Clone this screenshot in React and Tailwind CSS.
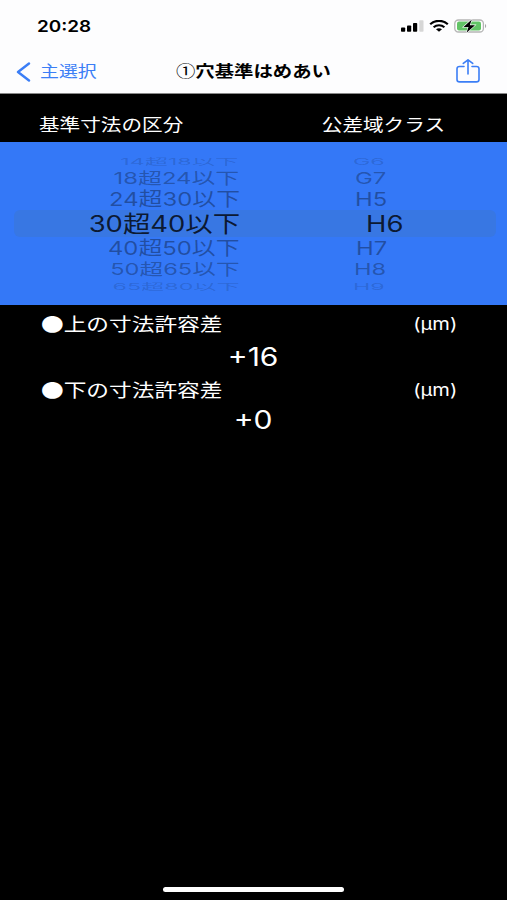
const pickerRows = [
  { size: '14超18以下', grade: 'G6', height: 'h-[13px]', width: 'w-[238px]', scale: 'scale-x-[1.08] scale-y-[0.43]', pad: 'pl-[115px]', color: 'text-black/15' },
  { size: '18超24以下', grade: 'G7', height: 'h-[21px]', width: 'w-[239px]', scale: 'scale-x-[1.11] scale-y-[0.75]', pad: 'pl-[116px]', color: 'text-black/30' },
  { size: '24超30以下', grade: 'H5', height: 'h-[22px]', width: 'w-[240px]', scale: 'scale-x-[1.11] scale-y-[0.88]', pad: 'pl-[115px]', color: 'text-black/35' },
  { size: '30超40以下', grade: 'H6', height: 'h-[27px]', width: 'w-[226px]', scale: 'scale-x-[1.23]', pad: 'pl-[126px]', color: 'text-black/80', selected: true },
  { size: '40超50以下', grade: 'H7', height: 'h-[22px]', width: 'w-[240px]', scale: 'scale-x-[1.11] scale-y-[0.88]', pad: 'pl-[116px]', color: 'text-black/35' },
  { size: '50超65以下', grade: 'H8', height: 'h-[20px]', width: 'w-[240px]', scale: 'scale-x-[1.1] scale-y-[0.75]', pad: 'pl-[114px]', color: 'text-black/30' },
  { size: '65超80以下', grade: 'H9', height: 'h-[13px]', width: 'w-[240px]', scale: 'scale-x-[1.08] scale-y-[0.43]', pad: 'pl-[113px]', color: 'text-black/15' },
]

function StatusIcons() {
  return (
    <div className="flex items-center">
      <svg className="w-[23px] h-[12px]" viewBox="0 0 23 12">
        <rect x="0" y="7.5" width="4.2" height="4.3" rx="0.8" fill="#000" />
        <rect x="6" y="5.5" width="4.2" height="6.3" rx="0.8" fill="#000" />
        <rect x="12" y="3" width="4.2" height="8.8" rx="0.8" fill="#000" />
        <rect x="18.3" y="0.3" width="4.2" height="11.5" rx="0.8" fill="#d6d6d6" />
      </svg>
      <svg className="ml-[5px] w-[20px] h-[12px]" viewBox="0 0 20 12" fill="none" stroke="#000">
        <path d="M1.2 4.3C6 -0.3 14 -0.3 18.8 4.3" strokeWidth="2.2" />
        <path d="M4.6 7.2C7.6 4.5 12.4 4.5 15.4 7.2" strokeWidth="2.1" />
        <path d="M7 9.2C8.7 7.9 11.3 7.9 13 9.2L10 11.8Z" fill="#000" stroke="none" />
      </svg>
      <svg className="ml-[5px] w-[33px] h-[16px]" viewBox="0 0 33 16">
        <rect x="0.8" y="2" width="28.6" height="12" rx="3.6" fill="#fff" stroke="#b5b5b5" strokeWidth="1.3" />
        <rect x="3" y="3.6" width="24" height="8.8" rx="2" fill="#62c466" />
        <path d="M31 6v4c1.6-.6 1.6-3.4 0-4z" fill="#a8a8a8" />
        <path d="M17.8 1.5L9.5 9h5l-2 5.8L21 7.2h-5.2z" fill="#000" stroke="#fff" strokeWidth="1.2" paintOrder="stroke" />
      </svg>
    </div>
  )
}

function ShareIcon() {
  return (
    <svg className="w-[26px] h-[26px]" viewBox="0 0 26 26" fill="none" stroke="#3b7ef6" strokeWidth="1.6" strokeLinecap="round" strokeLinejoin="round">
      <path d="M9 7.500H4.600C3 7.500 2 8.300 2 9.700v10.800c0 1.500 1 2.400 2.600 2.400h16.800c1.600 0 2.600-.9 2.600-2.400V9.700C24 8.300 23 7.500 21.400 7.500H17" />
      <path d="M13 15V1M8.300 4.400L13 .8L17.700 4.400" />
    </svg>
  )
}

function PickerRow({ row }) {
  return (
    <div className={`flex items-center whitespace-nowrap pt-[2px] leading-none ${row.height} ${row.color} ${row.selected ? 'mx-[14px] w-[482px] rounded-md bg-[#3877e3] text-[22.3px]' : 'text-[21.5px]'}`}>
      <div className={`flex shrink-0 justify-end ${row.width}`}>
        <span className={`origin-right ${row.scale}`}>{row.size}</span>
      </div>
      <div className={row.pad}>
        <span className={`inline-block origin-left ${row.scale}`}>{row.grade}</span>
      </div>
    </div>
  )
}

function Tolerance({ label, value, valueHeight }) {
  return (
    <>
      <div className="flex h-[34px] items-center justify-between pl-[41px] pr-[50px] leading-none">
        <span className="origin-left scale-x-[1.22] pb-[2px] font-['Noto_Sans_CJK_JP',sans-serif] text-[18.6px]">{label}</span>
        <span className="origin-right scale-x-[1.18] pt-px text-[17px]">(μm)</span>
      </div>
      <div className={`flex items-center justify-center leading-none ${valueHeight}`}>
        <span className="scale-x-[1.2] text-[25px]">{value}</span>
      </div>
    </>
  )
}

function App() {
  return (
    <div className="flex h-[900px] w-[507px] flex-col overflow-hidden bg-black font-['Inter','Noto_Sans_CJK_JP',sans-serif] text-white">
      <header className="h-[94px] shrink-0 border-b border-[#888] bg-[#fdfdfe] text-black">
        <div className="flex h-[51px] items-center justify-between pl-[37px] pr-[20px]">
          <span className="origin-left scale-x-[1.18] text-[16px] font-semibold leading-none">20:28</span>
          <StatusIcons />
        </div>
        <div className="grid h-[41px] grid-cols-[1fr_auto_1fr] items-center pl-[16px] pr-[26px] leading-none">
          <div className="flex items-center text-[#3b7ef6]">
            <svg className="h-[20px] w-[15px]" viewBox="0 0 15 20" fill="none" stroke="currentColor" strokeWidth="2.4" strokeLinecap="round" strokeLinejoin="round">
              <path d="M13 1.500L2 10l11 8.500" />
            </svg>
            <span className="ml-[9px] origin-left scale-x-[1.22] text-[15.5px]">主選択</span>
          </div>
          <h1 className="scale-x-[1.22] whitespace-nowrap pb-[2px] pl-[8px] font-['Noto_Sans_CJK_JP',sans-serif] text-[15.9px] font-bold"><span className="font-normal">①</span>穴基準はめあい</h1>
          <div className="flex justify-end">
            <ShareIcon />
          </div>
        </div>
      </header>

      <div className="flex h-[48px] shrink-0 items-center justify-between pl-[39px] pr-[62px] pt-[14px] text-[16.9px] leading-none">
        <span className="origin-left scale-x-[1.22]">基準寸法の区分</span>
        <span className="origin-right scale-x-[1.22]">公差域クラス</span>
      </div>

      <div className="flex h-[163px] shrink-0 flex-col bg-[#3478f7] pt-[12px]">
        {pickerRows.map((row) => (
          <PickerRow key={row.size} row={row} />
        ))}
      </div>

      <main className="flex-1 pt-[2px]">
        <Tolerance label="●上の寸法許容差" value="+16" valueHeight="h-[32px]" />
        <Tolerance label="●下の寸法許容差" value="+0" valueHeight="h-[26px]" />
      </main>

      <div className="mx-auto mb-[8px] h-[5px] w-[181px] shrink-0 rounded-full bg-white" />
    </div>
  )
}

export default App
